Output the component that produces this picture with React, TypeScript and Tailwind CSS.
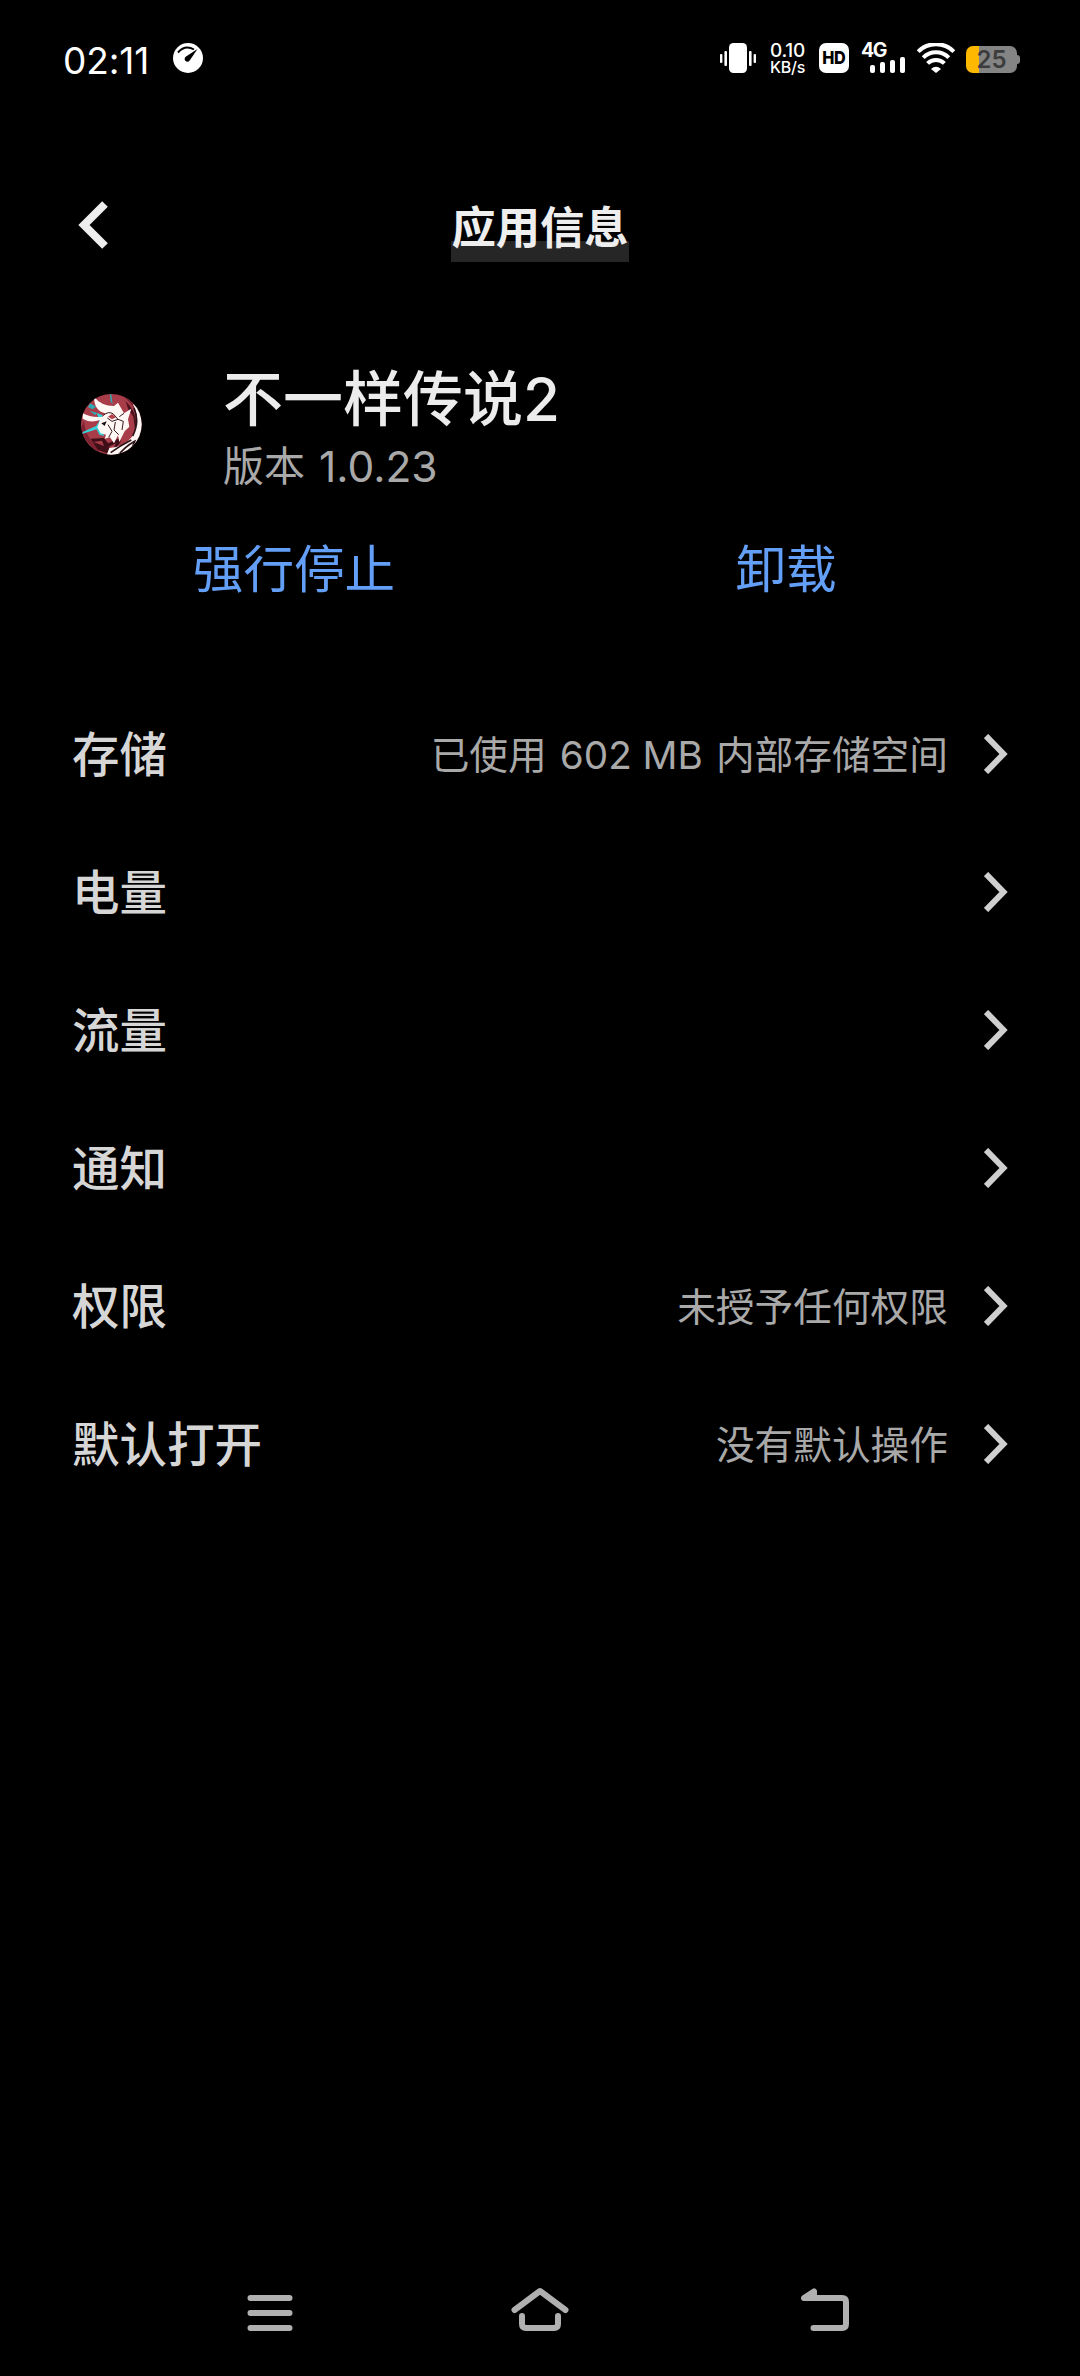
import React from 'react';

const rows = [
	{ label: '存储', value: ['已使用', '602 MB', '内部存储空间'] },
	{ label: '电量', value: [] },
	{ label: '流量', value: [] },
	{ label: '通知', value: [] },
	{ label: '权限', value: ['未授予任何权限'] },
	{ label: '默认打开', value: ['没有默认操作'] },
];

function AppLogo() {
	return (
		<svg viewBox="15 16 183 183" className="mb-[2px] h-[61px] w-[61px]">
			<defs>
				<clipPath id="disc">
					<circle cx="106" cy="107" r="91" />
				</clipPath>
			</defs>
			<g clipPath="url(#disc)">
				<rect x="10" y="12" width="190" height="190" fill="#a83c49" />
				<path d="M138 22 Q184 44 190 100 L178 130 L172 84 L156 60 L150 40 Z" fill="#4a121c" />
				<path d="M140 26 Q186 60 184 112" stroke="#a83c49" strokeWidth="7" fill="none" />
				<path d="M24 96 Q28 150 74 182 L60 190 L10 130 Z" fill="#7d2231" />
				<path d="M44 150 L84 148 L96 164 L132 148 L134 160 L104 198 L66 184 Z" fill="#3f0e16" />
				<path d="M52 160 L78 156 L84 172 Z M96 176 L120 164 L112 180 Z" fill="#a83c49" />
				<path d="M36 56 L50 62 L60 54 L42 44 Z M101 16 L106 18 L110 48 L104 38 Z M40 66 L62 72 L58 80 Z" fill="#2fa9b4" />
				<path d="M62 72 L80 80 L72 104 L84 142 L70 138 L62 122 L18 136 L20 130 L60 112 L70 98 Z" fill="#35d3d8" />
				{/* horns, face and mane */}
				<path
					d="M54 24 Q54 66 88 74 L80 84 Q46 88 20 74 L20 90 Q42 104 72 94 L64 116 L74 134 L90 138 L86 150 L102 146 L114 164 L126 140 L130 160 L146 128 L160 114 L156 92 L166 60 L144 74 L126 42 L114 52 Q76 52 54 24 Z"
					fill="#fff8f5"
				/>
				<path d="M170 46 Q196 90 168 144 Q146 174 100 178 L90 204 L200 204 L206 66 Z" fill="#fff8f5" />
				<path
					d="M174 58 Q192 100 170 142 M104 192 Q130 172 166 154 M124 204 Q144 176 176 158 L166 184"
					stroke="#2a1216"
					strokeWidth="5"
					fill="none"
				/>
				<path
					d="M82 80 Q98 66 112 76 L126 92 L108 98 L94 88 M96 108 L108 128 L98 146 M118 100 L114 124 L128 138 M126 92 L142 98 L138 124 M144 74 L130 84"
					stroke="#3a1a20"
					strokeWidth="3"
					fill="none"
				/>
				<path d="M96 84 L108 76 L120 86 L108 92 Z" fill="#b5404c" />
				<path d="M76 104 L92 98 L86 112 Z" fill="#1c1014" />
			</g>
		</svg>
	);
}

function StatusBar() {
	return (
		<div className="flex h-[116px] items-center pr-[60px] pl-[63px] text-white">
			<span className="w-[110px] pt-[4px] text-[37px] leading-none tracking-[-0.1px]">02:11</span>
			<svg viewBox="0 0 30 30" className="h-[30px] w-[30px]">
				<circle cx="15" cy="15" r="15" fill="#fff" />
				<path d="M5 9.5 Q12 1.5 21 6.5" stroke="#000" strokeWidth="2" fill="none" />
				<path d="M24.5 6 L17 17 A2.8 2.8 0 1 1 13 13.5 Z" fill="#000" />
			</svg>
			<div className="ml-auto flex h-[30px] items-center">
				<svg viewBox="0 0 36 30" className="h-[30px] w-[36px]" fill="#fff">
					<rect x="9" width="18" height="30" rx="4.5" />
					<rect y="11" width="2.4" height="9" rx="1" />
					<rect x="4.4" y="8" width="2.6" height="15" rx="1" />
					<rect x="29" y="8" width="2.6" height="15" rx="1" />
					<rect x="33.6" y="11" width="2.4" height="9" rx="1" />
				</svg>
				<div className="ml-[13px] flex w-[37px] flex-col items-center font-medium">
					<span className="text-[19px] leading-[17px] tracking-[-0.2px]">0.10</span>
					<span className="text-[16px] leading-[16px] tracking-[-0.2px]">KB/s</span>
				</div>
				<div className="ml-[13px] flex h-[30px] w-[30px] items-center justify-center rounded-[7px] bg-white text-[18px] leading-none font-extrabold text-black">
					<span className="scale-x-90 tracking-[-0.5px]">HD</span>
				</div>
				<div className="ml-3 flex h-[30px] w-[44px] flex-col justify-between">
					<span className="h-[14px] text-[19.5px] leading-[15px] font-bold tracking-[-1.4px]">4G</span>
					<div className="flex items-end justify-end gap-[5px]">
						<div className="h-2 w-[5px] rounded-[2px] bg-white" />
						<div className="h-[11px] w-[5px] rounded-[2px] bg-white" />
						<div className="h-[13px] w-[5px] rounded-[2px] bg-white" />
						<div className="h-[16px] w-[5px] rounded-[2px] bg-white" />
					</div>
				</div>
				<svg viewBox="0 0 38 30" className="ml-3 h-[30px] w-[38px]" fill="none" stroke="#fff" strokeWidth="4">
					<path d="M1.2 8.6 A25 25 0 0 1 36.8 8.6" />
					<path d="M6.2 14.6 A18 18 0 0 1 31.8 14.6" />
					<path d="M10.6 20.4 A11.8 11.8 0 0 1 27.4 20.4" />
					<path d="M14 26 Q19 21.5 24 26 L19 30 Z" fill="#fff" stroke="none" />
				</svg>
				<div className="ml-[11px] flex items-center pt-[3px]">
					<div className="flex h-[27px] w-[51px] items-center justify-center rounded-[7px] bg-linear-to-r from-[#ffb800] from-[13px] to-[#848484] to-[13px] pt-px text-[24px] leading-none font-semibold text-[#3c3c3c]">
						25
					</div>
					<div className="h-[9px] w-[3px] rounded-r-[3px] bg-[#848484]" />
				</div>
			</div>
		</div>
	);
}

function NavBar() {
	return (
		<div className="mt-auto flex h-[126px] items-center pl-[230px] text-[#b0b0b0]">
			<svg viewBox="0 0 80 60" className="h-[60px] w-[80px]" stroke="currentColor" strokeWidth="6" strokeLinecap="round">
				<path d="M20.5 15 H59.5 M20.5 30 H59.5 M20.5 45 H59.5" />
			</svg>
			<svg
				viewBox="0 0 80 60"
				className="ml-[190px] h-[60px] w-[80px]"
				fill="none"
				stroke="currentColor"
				strokeWidth="6"
				strokeLinecap="round"
				strokeLinejoin="round"
			>
				<path d="M14.5 27 L40 8 L65.5 27" />
				<path d="M22 33 V41 Q22 45 26 45 H54 Q58 45 58 41 V33" />
			</svg>
			<svg
				viewBox="0 0 80 60"
				className="ml-[205px] h-[60px] w-[80px]"
				fill="none"
				stroke="currentColor"
				strokeWidth="6"
				strokeLinecap="round"
				strokeLinejoin="round"
			>
				<path d="M28.5 45 H57 Q61 45 61 41 V19 Q61 15 57 15 H19 L29 8.5 V14" />
			</svg>
		</div>
	);
}

export default function App() {
	return (
		<div className="flex h-[2376px] w-[1080px] flex-col bg-black font-['Inter','Noto_Sans_CJK_SC',sans-serif]">
			<StatusBar />
			<div className="flex h-[218px] items-center px-[78px]">
				<svg viewBox="0 0 30 48" className="h-[48px] w-[30px]" fill="none" stroke="#eeeeee" strokeWidth="8">
					<path d="M27 3 L6 24 L27 45" />
				</svg>
				<div className="flex flex-1 justify-center pt-[11px] pr-[30px]">
					<div className="bg-linear-to-b from-transparent from-[42px] to-[#262626] to-[42px] pb-[5px] text-[44.3px] leading-[58px] font-bold text-[#eeeeee]">
						应用信息
					</div>
				</div>
			</div>
			<div className="flex h-[182px] items-center pl-[81px]">
				<AppLogo />
				<div className="ml-[81px] flex flex-col pt-[9px]">
					<div className="text-[60px] leading-[74px] font-medium text-[#ececec]">不一样传说2</div>
					<div className="flex text-[41px] leading-[61px] text-[#a9a9a9]">
						版本<span className="ml-[14px] text-[42.5px]">1.0.23</span>
					</div>
				</div>
			</div>
			<div className="flex h-[108px] items-center px-12 text-[50.6px] text-[#639ff6]">
				<div className="flex-1 text-center">强行停止</div>
				<div className="flex-1 text-center">卸载</div>
			</div>
			<div className="flex flex-col pt-[61px]">
				{rows.map((row) => (
					<div key={row.label} className="flex h-[138px] items-center px-[72px]">
						<div className="pt-[2px] text-[47.5px] leading-none font-medium text-[#d6d6d6]">{row.label}</div>
						<div className="ml-auto flex gap-[13px] pt-[2px] text-[38.7px] leading-none text-[#a9a9a9]">
							{row.value.map((part) => (
								<span key={part}>{part}</span>
							))}
						</div>
						<svg viewBox="0 0 24 40" className="ml-[36px] h-[40px] w-[24px]" fill="none" stroke="#cfcfcf" strokeWidth="6">
							<path d="M2 2 L19.5 20 L2 38" />
						</svg>
					</div>
				))}
			</div>
			<NavBar />
		</div>
	);
}
